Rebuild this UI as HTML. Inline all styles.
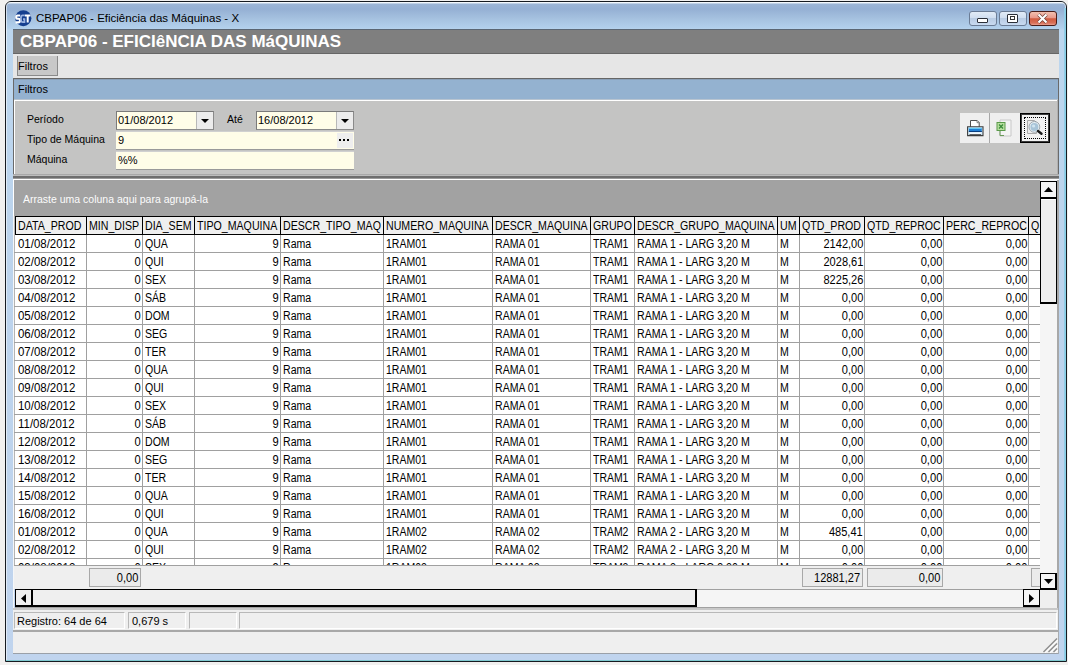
<!DOCTYPE html>
<html><head><meta charset="utf-8">
<style>
*{margin:0;padding:0;box-sizing:border-box}
html,body{width:1068px;height:665px;overflow:hidden;background:#f1f0ef;font-family:"Liberation Sans",sans-serif;font-size:11px;color:#000}
.a{position:absolute}
#win{left:5px;top:1px;width:1062px;height:661px;border:1px solid #161a20;border-radius:6px 6px 0 0;
 background:linear-gradient(to bottom,#e4eef8 0px,#e4eef8 1px,#9cb5d6 2px,#95b0d4 7px,#a6c2e0 17px,#b2d0ec 26px,#bcd6ee 28px,#bcd3ec 300px,#c0d4ee 661px);overflow:hidden}
#winin{left:6px;top:2px;width:1060px;height:659px;border:1px solid rgba(255,255,255,.55);border-radius:5px 5px 0 0;border-bottom:none}
#cyanr{left:1064px;top:8px;width:2px;height:653px;background:linear-gradient(to right,#9ccbe6,#7fd0e6)}
#cyanb{left:6px;top:660px;width:1060px;height:1px;background:#7fc9d0}
#ttl{left:36px;top:12px;font-size:11.5px;color:#000;white-space:nowrap}
#hdrtop{left:13px;top:29px;width:1046px;height:1px;background:#5b6673}
#hdr{left:13px;top:30px;width:1046px;height:24px;background:#7f7f7f;color:#fff;font-weight:bold;font-size:17px;white-space:nowrap;padding:2px 0 0 7px;border-bottom:1px solid #666}
#tabstrip{left:13px;top:54px;width:1046px;height:24px;background:#e6e6e6}
#tab{left:17px;top:56px;width:41px;height:20px;background:#c8c8c8;border-left:1px solid #8a8a8a;border-right:1px solid #8a8a8a;border-bottom:1px solid #8a8a8a;padding:4px 0 0 0}
#grpline{left:13px;top:78px;width:1046px;height:1px;background:#666}
#grpline2{left:14px;top:79px;width:1044px;height:1px;background:#8aa0b8}
#grphdr{left:13px;top:80px;width:1046px;height:19px;background:#94b2d0;padding:3px 0 0 5px;color:#000}
#grphdr2{left:13px;top:99px;width:1046px;height:1px;background:#b8c4d0}
#panelw{left:13px;top:100px;width:1046px;height:1px;background:#fff}
#panel{left:13px;top:101px;width:1046px;height:73px;background:#c4c4c3;border-left:1px solid #fff;border-right:1px solid #666}
#panelr{left:1057px;top:100px;width:1px;height:78px;background:#b0b0b0}
#grpr{left:1058px;top:78px;width:1px;height:100px;background:#6a6a6a}
#pl1{left:13px;top:174px;width:1046px;height:1px;background:#a8a8a8}
#pl2{left:13px;top:175px;width:1046px;height:1px;background:#bdbdbd}
#pl3{left:13px;top:176px;width:1046px;height:2px;background:#6e6e6e;border-bottom:none}
#pl3b{left:13px;top:178px;width:1046px;height:1px;background:#9a9a9a}
#pl4{left:13px;top:179px;width:1046px;height:1px;background:#fff}
.lbl{position:absolute;white-space:nowrap}
.inp{position:absolute;background:#fffde8;border:1px solid #7c7c7c;border-color:#7a7a7a #8a8a8a #8a8a8a #7a7a7a;padding:2px 0 0 1px;white-space:nowrap}
.inp2{position:absolute;background:#fffde8;border-bottom:1px solid #9a9a9a;border-top:1px solid #d0d0d0;padding:2px 0 0 2px;white-space:nowrap}
.ddb{position:absolute;width:17px;height:17px;background:#ececec;border-left:1px solid #b8b8b8}
#grouparea{left:13px;top:180px;width:1027px;height:36px;background:#a2a2a2;border-left:1px solid #fff}
#groupt{left:23px;top:193px;color:#fcfcfc;white-space:nowrap;font-size:10.5px}
#gridbody{left:14px;top:216px;width:1026px;height:350px;background:#fff;border-left:1px solid #b4b4b4}
.hc{position:absolute;top:216px;height:19px;background:#efefef;border-top:1px solid #000;border-bottom:1px solid #000;border-right:1px solid #000;padding:2px 0 0 2px;white-space:nowrap;overflow:hidden;font-size:12px;line-height:14px}
.cell{position:absolute;height:18px;border-right:1px solid #a0a0a0;border-bottom:1px solid #a0a0a0;padding:2px 1px 0 2px;white-space:nowrap;overflow:hidden;font-size:12px;line-height:14px}
.t{display:inline-block;transform-origin:0 0}
.tr{transform-origin:100% 0}
.cell.r{text-align:right}
#footer{left:14px;top:565px;width:1026px;height:24px;background:#efefef;border-top:1px solid #a0a0a0}
.tot{position:absolute;height:19px;background:#ebebeb;border:1px solid #a8a8a8;text-align:right;padding:2px 2px 0 0;line-height:14px;font-size:12px;white-space:nowrap}
#vsb{left:1040px;top:180px;width:17px;height:409px;background:#f5f5f5}
#hsb{left:15px;top:589px;width:1025px;height:19px;background:#f5f5f5;border-top:1px solid #a0a0a0;border-bottom:1px solid #a0a0a0}
#rightline{left:1057px;top:180px;width:2px;height:430px;background:#a8a8a8}
#status{left:13px;top:608px;width:1046px;height:45px;background:#efefef;border-top:2px solid #c8c8c8}
.sp{position:absolute;top:612px;height:17px;border:1px solid #cfcfcf;border-color:#b8b8b8 #fff #fff #b8b8b8;padding:2px 0 0 2px;white-space:nowrap;line-height:12px}
#botline{left:13px;top:630px;width:1046px;height:2px;background:#a8a8a8}
#botline2{left:13px;top:653px;width:1046px;height:1px;background:#9aa0a8}
#leftline{left:13px;top:78px;width:1px;height:100px;background:#6a6a6a}
#leftw{left:13px;top:180px;width:1px;height:473px;background:#f4f6f8}
</style></head><body>
<div id="win" class="a"></div>
<div id="winin" class="a"></div>
<div id="cyanr" class="a"></div>
<div id="cyanb" class="a"></div>
<!-- window title -->
<svg class="a" style="left:14px;top:9px" width="19" height="19" viewBox="0 0 19 19">
 <ellipse cx="9.3" cy="9.2" rx="8.1" ry="8" fill="#153f8f"/>
 <path d="M6.2 6.5 H3.6 Q2.2 6.5 2.2 8.2 Q2.2 9.8 3.8 9.8 H4.6 Q6 9.8 6 11.6 Q6 13.4 4.4 13.4 H1.6" stroke="#fff" stroke-width="2.1" fill="none"/>
 <path d="M10.6 6.4 H8.6 Q6.9 6.4 6.9 9.6 Q6.9 13.2 8.8 13.2 H10.4 V10.2 H9" stroke="#9cb4e0" stroke-width="1.8" fill="none"/>
 <path d="M10.8 6.4 H16.6 M13.7 6.4 V13.6" stroke="#fff" stroke-width="2" fill="none"/>
</svg>
<div id="ttl" class="a">CBPAP06 - Eficiência das Máquinas - X</div>
<!-- window buttons -->
<div class="a" style="left:969px;top:11px;width:28px;height:15px;border:1px solid #6b7c95;border-radius:3px;background:linear-gradient(#e1ebf6,#d0def0 45%,#b9cce4 50%,#c8daf0 100%)"></div>
<div class="a" style="left:977px;top:18px;width:11px;height:5px;background:#fff;border:1px solid #2a2f38;border-radius:1px"></div>
<div class="a" style="left:999px;top:11px;width:28px;height:15px;border:1px solid #6b7c95;border-radius:3px;background:linear-gradient(#e1ebf6,#d0def0 45%,#b9cce4 50%,#c8daf0 100%)"></div>
<div class="a" style="left:1007px;top:14px;width:11px;height:9px;background:#fff;border:1px solid #2a2f38;border-radius:1px"></div>
<div class="a" style="left:1010px;top:16px;width:5px;height:4px;background:#fff;border:1px solid #333"></div>
<div class="a" style="left:1029px;top:11px;width:28px;height:15px;border:1px solid #4a1c18;border-radius:3px;background:linear-gradient(#f2c0b0,#e8988a 45%,#d05a3e 52%,#d8705a 85%,#eaa090 100%)"></div>
<svg class="a" style="left:1036px;top:13px" width="13" height="11" viewBox="0 0 13 11"><path d="M2.5 1.5 L10.5 9.5 M10.5 1.5 L2.5 9.5" stroke="#6a3a30" stroke-width="3.4"/><path d="M2.5 1.5 L10.5 9.5 M10.5 1.5 L2.5 9.5" stroke="#fff" stroke-width="2.2"/></svg>

<div id="hdrtop" class="a"></div>
<div id="hdr" class="a">CBPAP06 - EFICIêNCIA DAS MáQUINAS</div>
<div id="tabstrip" class="a"></div>
<div id="tab" class="a">Filtros</div>
<div id="grpline" class="a"></div><div id="grpline2" class="a"></div>
<div id="grphdr" class="a">Filtros</div>
<div id="grphdr2" class="a"></div>
<div id="panelw" class="a"></div>
<div id="panel" class="a"></div><div id="panelr" class="a"></div><div id="grpr" class="a"></div>
<div id="leftline" class="a"></div><div class="a" style="left:14px;top:100px;width:1px;height:75px;background:#fff"></div><div id="leftw" class="a"></div><div id="pl1" class="a"></div><div id="pl2" class="a"></div><div id="pl3" class="a"></div><div id="pl3b" class="a"></div><div id="pl4" class="a"></div>

<div class="lbl" style="left:27px;top:113px;font-size:10.5px">Período</div>
<div class="lbl" style="left:27px;top:133px;font-size:10.5px">Tipo de Máquina</div>
<div class="lbl" style="left:27px;top:153px;font-size:10.5px">Máquina</div>
<div class="lbl" style="left:227px;top:113px;font-size:10.5px">Até</div>
<div class="inp" style="left:116px;top:111px;width:98px;height:19px">01/08/2012</div>
<div class="ddb" style="left:196px;top:112px"></div>
<svg class="a" style="left:201px;top:119px" width="8" height="4"><path d="M0 0 H8 L4 4Z" fill="#000"/></svg>
<div class="inp" style="left:256px;top:111px;width:98px;height:19px">16/08/2012</div>
<div class="ddb" style="left:336px;top:112px"></div>
<svg class="a" style="left:341px;top:119px" width="8" height="4"><path d="M0 0 H8 L4 4Z" fill="#000"/></svg>
<div class="inp2" style="left:116px;top:131px;width:238px;height:19px">9</div>
<div class="a" style="left:337px;top:133px;width:16px;height:15px;background:#eeeeee"></div>
<div class="a" style="left:339px;top:139px;width:2px;height:2px;background:#000"></div>
<div class="a" style="left:343px;top:139px;width:2px;height:2px;background:#000"></div>
<div class="a" style="left:347px;top:139px;width:2px;height:2px;background:#000"></div>
<div class="inp2" style="left:116px;top:151px;width:238px;height:19px">%%</div>

<!-- toolbar buttons -->
<div class="a" style="left:960px;top:113px;width:30px;height:30px;background:#efefef;border-right:1px solid #a8a8a8"></div>
<div class="a" style="left:990px;top:113px;width:30px;height:30px;background:#efefef"></div>
<div class="a" style="left:1020px;top:113px;width:30px;height:30px;background:#f2f2f2;border:1px solid #000;box-shadow:inset 0 0 0 1px #3a3a3a"></div>
<div class="a" style="left:1024px;top:117px;width:22px;height:22px;border:1px dotted #000"></div>
<!-- printer icon -->
<svg class="a" style="left:960px;top:114px" width="30" height="28" viewBox="0 0 30 28">
 <path d="M10.5 13 V6.5 H17.2 L19.2 8.5 V13" fill="#fff" stroke="#505050" stroke-width="1"/>
 <path d="M17 6.5 V8.7 H19.2" fill="#e8e8e8" stroke="#6a6a6a" stroke-width="0.8"/>
 <path d="M7.6 12.8 H23 V21.6 H7.6 Z" fill="#d8eefa" stroke="#3c3c3c" stroke-width="1.1"/>
 <rect x="8.8" y="13.9" width="13" height="3.9" fill="#1f7fd6"/>
 <rect x="8.8" y="13.9" width="13" height="1.1" fill="#62c8f4"/>
 <rect x="8.8" y="17" width="13" height="1" fill="#0b3d7e"/>
 <rect x="9.8" y="18.6" width="11" height="1.8" fill="#f4f8fc"/>
 <rect x="9.5" y="20.1" width="11.6" height="0.9" fill="#555"/>
</svg>
<!-- excel icon -->
<svg class="a" style="left:994px;top:117px" width="22" height="22" viewBox="0 0 22 22">
 <path d="M6 3 H17 V19 H6Z" fill="#f4f4f4" stroke="#c8c8c8"/>
 <rect x="3" y="5.5" width="8" height="8" fill="#b8e0a0" stroke="#5a9a4a"/>
 <path d="M5 7.5 L9 11.5 M9 7.5 L5 11.5" stroke="#3a8a3a" stroke-width="1.3"/>
 <path d="M6 14 V18.5 H10" stroke="#6a9a5a" fill="none"/>
</svg>
<!-- preview icon -->
<svg class="a" style="left:1024px;top:117px" width="22" height="22" viewBox="0 0 22 22">
 <path d="M3.5 3.5 H10.5 L12.5 5.5 V16.5 H3.5Z" fill="#ececec" stroke="#a8a8a8"/>
 <circle cx="10.4" cy="9.9" r="4.6" fill="#a8c4d8" stroke="#e8f0f4" stroke-width="1.2"/>
 <circle cx="10.4" cy="9.9" r="5.4" fill="none" stroke="#8a96a0" stroke-width="0.8"/>
 <circle cx="9.6" cy="9" r="1.6" fill="#d0e4f0"/>
 <path d="M14 14 L17.5 16.8" stroke="#1a1a1a" stroke-width="2.4" stroke-linecap="round"/>
</svg>

<div id="grouparea" class="a"></div>
<div id="groupt" class="a">Arraste uma coluna aqui para agrupá-la</div>
<div id="gridbody" class="a"></div>
<div class="a" style="left:0;top:0;width:1040px;height:566px;overflow:hidden">
<div class="hc" style="left:15px;width:72px;border-left:1px solid #000"><span class="t" style="transform:scaleX(0.885)">DATA_PROD</span></div>
<div class="hc" style="left:87px;width:56px"><span class="t" style="transform:scaleX(0.885)">MIN_DISP</span></div>
<div class="hc" style="left:143px;width:52px"><span class="t" style="transform:scaleX(0.885)">DIA_SEM</span></div>
<div class="hc" style="left:195px;width:86px"><span class="t" style="transform:scaleX(0.885)">TIPO_MAQUINA</span></div>
<div class="hc" style="left:281px;width:103px"><span class="t" style="transform:scaleX(0.885)">DESCR_TIPO_MAQ</span></div>
<div class="hc" style="left:384px;width:109px"><span class="t" style="transform:scaleX(0.885)">NUMERO_MAQUINA</span></div>
<div class="hc" style="left:493px;width:98px"><span class="t" style="transform:scaleX(0.885)">DESCR_MAQUINA</span></div>
<div class="hc" style="left:591px;width:44px"><span class="t" style="transform:scaleX(0.885)">GRUPO</span></div>
<div class="hc" style="left:635px;width:143px"><span class="t" style="transform:scaleX(0.885)">DESCR_GRUPO_MAQUINA</span></div>
<div class="hc" style="left:778px;width:22px"><span class="t" style="transform:scaleX(0.885)">UM</span></div>
<div class="hc" style="left:800px;width:65px"><span class="t" style="transform:scaleX(0.885)">QTD_PROD</span></div>
<div class="hc" style="left:865px;width:79px"><span class="t" style="transform:scaleX(0.885)">QTD_REPROC</span></div>
<div class="hc" style="left:944px;width:85px"><span class="t" style="transform:scaleX(0.885)">PERC_REPROC</span></div>
<div class="hc" style="left:1029px;width:42px"><span class="t" style="transform:scaleX(0.885)">Q</span></div>
<div class="cell" style="left:14px;top:235px;width:73px;padding-left:4px"><span class="t" style="transform:scaleX(0.955)">01/08/2012</span></div>
<div class="cell r" style="left:87px;top:235px;width:56px"><span class="t tr" style="transform:scaleX(0.93)">0</span></div>
<div class="cell" style="left:143px;top:235px;width:52px"><span class="t" style="transform:scaleX(0.88)">QUA</span></div>
<div class="cell r" style="left:195px;top:235px;width:86px"><span class="t tr" style="transform:scaleX(0.93)">9</span></div>
<div class="cell" style="left:281px;top:235px;width:103px"><span class="t" style="transform:scaleX(0.88)">Rama</span></div>
<div class="cell" style="left:384px;top:235px;width:109px"><span class="t" style="transform:scaleX(0.875)">1RAM01</span></div>
<div class="cell" style="left:493px;top:235px;width:98px"><span class="t" style="transform:scaleX(0.88)">RAMA 01</span></div>
<div class="cell" style="left:591px;top:235px;width:44px"><span class="t" style="transform:scaleX(0.87)">TRAM1</span></div>
<div class="cell" style="left:635px;top:235px;width:143px"><span class="t" style="transform:scaleX(0.885)">RAMA 1 - LARG 3,20 M</span></div>
<div class="cell" style="left:778px;top:235px;width:22px"><span class="t" style="transform:scaleX(0.88)">M</span></div>
<div class="cell r" style="left:800px;top:235px;width:65px"><span class="t tr" style="transform:scaleX(0.92)">2142,00</span></div>
<div class="cell r" style="left:865px;top:235px;width:79px"><span class="t tr" style="transform:scaleX(0.93)">0,00</span></div>
<div class="cell r" style="left:944px;top:235px;width:85px"><span class="t tr" style="transform:scaleX(0.93)">0,00</span></div>
<div class="cell" style="left:1029px;top:235px;width:42px"></div>
<div class="cell" style="left:14px;top:253px;width:73px;padding-left:4px"><span class="t" style="transform:scaleX(0.955)">02/08/2012</span></div>
<div class="cell r" style="left:87px;top:253px;width:56px"><span class="t tr" style="transform:scaleX(0.93)">0</span></div>
<div class="cell" style="left:143px;top:253px;width:52px"><span class="t" style="transform:scaleX(0.88)">QUI</span></div>
<div class="cell r" style="left:195px;top:253px;width:86px"><span class="t tr" style="transform:scaleX(0.93)">9</span></div>
<div class="cell" style="left:281px;top:253px;width:103px"><span class="t" style="transform:scaleX(0.88)">Rama</span></div>
<div class="cell" style="left:384px;top:253px;width:109px"><span class="t" style="transform:scaleX(0.875)">1RAM01</span></div>
<div class="cell" style="left:493px;top:253px;width:98px"><span class="t" style="transform:scaleX(0.88)">RAMA 01</span></div>
<div class="cell" style="left:591px;top:253px;width:44px"><span class="t" style="transform:scaleX(0.87)">TRAM1</span></div>
<div class="cell" style="left:635px;top:253px;width:143px"><span class="t" style="transform:scaleX(0.885)">RAMA 1 - LARG 3,20 M</span></div>
<div class="cell" style="left:778px;top:253px;width:22px"><span class="t" style="transform:scaleX(0.88)">M</span></div>
<div class="cell r" style="left:800px;top:253px;width:65px"><span class="t tr" style="transform:scaleX(0.92)">2028,61</span></div>
<div class="cell r" style="left:865px;top:253px;width:79px"><span class="t tr" style="transform:scaleX(0.93)">0,00</span></div>
<div class="cell r" style="left:944px;top:253px;width:85px"><span class="t tr" style="transform:scaleX(0.93)">0,00</span></div>
<div class="cell" style="left:1029px;top:253px;width:42px"></div>
<div class="cell" style="left:14px;top:271px;width:73px;padding-left:4px"><span class="t" style="transform:scaleX(0.955)">03/08/2012</span></div>
<div class="cell r" style="left:87px;top:271px;width:56px"><span class="t tr" style="transform:scaleX(0.93)">0</span></div>
<div class="cell" style="left:143px;top:271px;width:52px"><span class="t" style="transform:scaleX(0.88)">SEX</span></div>
<div class="cell r" style="left:195px;top:271px;width:86px"><span class="t tr" style="transform:scaleX(0.93)">9</span></div>
<div class="cell" style="left:281px;top:271px;width:103px"><span class="t" style="transform:scaleX(0.88)">Rama</span></div>
<div class="cell" style="left:384px;top:271px;width:109px"><span class="t" style="transform:scaleX(0.875)">1RAM01</span></div>
<div class="cell" style="left:493px;top:271px;width:98px"><span class="t" style="transform:scaleX(0.88)">RAMA 01</span></div>
<div class="cell" style="left:591px;top:271px;width:44px"><span class="t" style="transform:scaleX(0.87)">TRAM1</span></div>
<div class="cell" style="left:635px;top:271px;width:143px"><span class="t" style="transform:scaleX(0.885)">RAMA 1 - LARG 3,20 M</span></div>
<div class="cell" style="left:778px;top:271px;width:22px"><span class="t" style="transform:scaleX(0.88)">M</span></div>
<div class="cell r" style="left:800px;top:271px;width:65px"><span class="t tr" style="transform:scaleX(0.92)">8225,26</span></div>
<div class="cell r" style="left:865px;top:271px;width:79px"><span class="t tr" style="transform:scaleX(0.93)">0,00</span></div>
<div class="cell r" style="left:944px;top:271px;width:85px"><span class="t tr" style="transform:scaleX(0.93)">0,00</span></div>
<div class="cell" style="left:1029px;top:271px;width:42px"></div>
<div class="cell" style="left:14px;top:289px;width:73px;padding-left:4px"><span class="t" style="transform:scaleX(0.955)">04/08/2012</span></div>
<div class="cell r" style="left:87px;top:289px;width:56px"><span class="t tr" style="transform:scaleX(0.93)">0</span></div>
<div class="cell" style="left:143px;top:289px;width:52px"><span class="t" style="transform:scaleX(0.88)">SÁB</span></div>
<div class="cell r" style="left:195px;top:289px;width:86px"><span class="t tr" style="transform:scaleX(0.93)">9</span></div>
<div class="cell" style="left:281px;top:289px;width:103px"><span class="t" style="transform:scaleX(0.88)">Rama</span></div>
<div class="cell" style="left:384px;top:289px;width:109px"><span class="t" style="transform:scaleX(0.875)">1RAM01</span></div>
<div class="cell" style="left:493px;top:289px;width:98px"><span class="t" style="transform:scaleX(0.88)">RAMA 01</span></div>
<div class="cell" style="left:591px;top:289px;width:44px"><span class="t" style="transform:scaleX(0.87)">TRAM1</span></div>
<div class="cell" style="left:635px;top:289px;width:143px"><span class="t" style="transform:scaleX(0.885)">RAMA 1 - LARG 3,20 M</span></div>
<div class="cell" style="left:778px;top:289px;width:22px"><span class="t" style="transform:scaleX(0.88)">M</span></div>
<div class="cell r" style="left:800px;top:289px;width:65px"><span class="t tr" style="transform:scaleX(0.92)">0,00</span></div>
<div class="cell r" style="left:865px;top:289px;width:79px"><span class="t tr" style="transform:scaleX(0.93)">0,00</span></div>
<div class="cell r" style="left:944px;top:289px;width:85px"><span class="t tr" style="transform:scaleX(0.93)">0,00</span></div>
<div class="cell" style="left:1029px;top:289px;width:42px"></div>
<div class="cell" style="left:14px;top:307px;width:73px;padding-left:4px"><span class="t" style="transform:scaleX(0.955)">05/08/2012</span></div>
<div class="cell r" style="left:87px;top:307px;width:56px"><span class="t tr" style="transform:scaleX(0.93)">0</span></div>
<div class="cell" style="left:143px;top:307px;width:52px"><span class="t" style="transform:scaleX(0.88)">DOM</span></div>
<div class="cell r" style="left:195px;top:307px;width:86px"><span class="t tr" style="transform:scaleX(0.93)">9</span></div>
<div class="cell" style="left:281px;top:307px;width:103px"><span class="t" style="transform:scaleX(0.88)">Rama</span></div>
<div class="cell" style="left:384px;top:307px;width:109px"><span class="t" style="transform:scaleX(0.875)">1RAM01</span></div>
<div class="cell" style="left:493px;top:307px;width:98px"><span class="t" style="transform:scaleX(0.88)">RAMA 01</span></div>
<div class="cell" style="left:591px;top:307px;width:44px"><span class="t" style="transform:scaleX(0.87)">TRAM1</span></div>
<div class="cell" style="left:635px;top:307px;width:143px"><span class="t" style="transform:scaleX(0.885)">RAMA 1 - LARG 3,20 M</span></div>
<div class="cell" style="left:778px;top:307px;width:22px"><span class="t" style="transform:scaleX(0.88)">M</span></div>
<div class="cell r" style="left:800px;top:307px;width:65px"><span class="t tr" style="transform:scaleX(0.92)">0,00</span></div>
<div class="cell r" style="left:865px;top:307px;width:79px"><span class="t tr" style="transform:scaleX(0.93)">0,00</span></div>
<div class="cell r" style="left:944px;top:307px;width:85px"><span class="t tr" style="transform:scaleX(0.93)">0,00</span></div>
<div class="cell" style="left:1029px;top:307px;width:42px"></div>
<div class="cell" style="left:14px;top:325px;width:73px;padding-left:4px"><span class="t" style="transform:scaleX(0.955)">06/08/2012</span></div>
<div class="cell r" style="left:87px;top:325px;width:56px"><span class="t tr" style="transform:scaleX(0.93)">0</span></div>
<div class="cell" style="left:143px;top:325px;width:52px"><span class="t" style="transform:scaleX(0.88)">SEG</span></div>
<div class="cell r" style="left:195px;top:325px;width:86px"><span class="t tr" style="transform:scaleX(0.93)">9</span></div>
<div class="cell" style="left:281px;top:325px;width:103px"><span class="t" style="transform:scaleX(0.88)">Rama</span></div>
<div class="cell" style="left:384px;top:325px;width:109px"><span class="t" style="transform:scaleX(0.875)">1RAM01</span></div>
<div class="cell" style="left:493px;top:325px;width:98px"><span class="t" style="transform:scaleX(0.88)">RAMA 01</span></div>
<div class="cell" style="left:591px;top:325px;width:44px"><span class="t" style="transform:scaleX(0.87)">TRAM1</span></div>
<div class="cell" style="left:635px;top:325px;width:143px"><span class="t" style="transform:scaleX(0.885)">RAMA 1 - LARG 3,20 M</span></div>
<div class="cell" style="left:778px;top:325px;width:22px"><span class="t" style="transform:scaleX(0.88)">M</span></div>
<div class="cell r" style="left:800px;top:325px;width:65px"><span class="t tr" style="transform:scaleX(0.92)">0,00</span></div>
<div class="cell r" style="left:865px;top:325px;width:79px"><span class="t tr" style="transform:scaleX(0.93)">0,00</span></div>
<div class="cell r" style="left:944px;top:325px;width:85px"><span class="t tr" style="transform:scaleX(0.93)">0,00</span></div>
<div class="cell" style="left:1029px;top:325px;width:42px"></div>
<div class="cell" style="left:14px;top:343px;width:73px;padding-left:4px"><span class="t" style="transform:scaleX(0.955)">07/08/2012</span></div>
<div class="cell r" style="left:87px;top:343px;width:56px"><span class="t tr" style="transform:scaleX(0.93)">0</span></div>
<div class="cell" style="left:143px;top:343px;width:52px"><span class="t" style="transform:scaleX(0.88)">TER</span></div>
<div class="cell r" style="left:195px;top:343px;width:86px"><span class="t tr" style="transform:scaleX(0.93)">9</span></div>
<div class="cell" style="left:281px;top:343px;width:103px"><span class="t" style="transform:scaleX(0.88)">Rama</span></div>
<div class="cell" style="left:384px;top:343px;width:109px"><span class="t" style="transform:scaleX(0.875)">1RAM01</span></div>
<div class="cell" style="left:493px;top:343px;width:98px"><span class="t" style="transform:scaleX(0.88)">RAMA 01</span></div>
<div class="cell" style="left:591px;top:343px;width:44px"><span class="t" style="transform:scaleX(0.87)">TRAM1</span></div>
<div class="cell" style="left:635px;top:343px;width:143px"><span class="t" style="transform:scaleX(0.885)">RAMA 1 - LARG 3,20 M</span></div>
<div class="cell" style="left:778px;top:343px;width:22px"><span class="t" style="transform:scaleX(0.88)">M</span></div>
<div class="cell r" style="left:800px;top:343px;width:65px"><span class="t tr" style="transform:scaleX(0.92)">0,00</span></div>
<div class="cell r" style="left:865px;top:343px;width:79px"><span class="t tr" style="transform:scaleX(0.93)">0,00</span></div>
<div class="cell r" style="left:944px;top:343px;width:85px"><span class="t tr" style="transform:scaleX(0.93)">0,00</span></div>
<div class="cell" style="left:1029px;top:343px;width:42px"></div>
<div class="cell" style="left:14px;top:361px;width:73px;padding-left:4px"><span class="t" style="transform:scaleX(0.955)">08/08/2012</span></div>
<div class="cell r" style="left:87px;top:361px;width:56px"><span class="t tr" style="transform:scaleX(0.93)">0</span></div>
<div class="cell" style="left:143px;top:361px;width:52px"><span class="t" style="transform:scaleX(0.88)">QUA</span></div>
<div class="cell r" style="left:195px;top:361px;width:86px"><span class="t tr" style="transform:scaleX(0.93)">9</span></div>
<div class="cell" style="left:281px;top:361px;width:103px"><span class="t" style="transform:scaleX(0.88)">Rama</span></div>
<div class="cell" style="left:384px;top:361px;width:109px"><span class="t" style="transform:scaleX(0.875)">1RAM01</span></div>
<div class="cell" style="left:493px;top:361px;width:98px"><span class="t" style="transform:scaleX(0.88)">RAMA 01</span></div>
<div class="cell" style="left:591px;top:361px;width:44px"><span class="t" style="transform:scaleX(0.87)">TRAM1</span></div>
<div class="cell" style="left:635px;top:361px;width:143px"><span class="t" style="transform:scaleX(0.885)">RAMA 1 - LARG 3,20 M</span></div>
<div class="cell" style="left:778px;top:361px;width:22px"><span class="t" style="transform:scaleX(0.88)">M</span></div>
<div class="cell r" style="left:800px;top:361px;width:65px"><span class="t tr" style="transform:scaleX(0.92)">0,00</span></div>
<div class="cell r" style="left:865px;top:361px;width:79px"><span class="t tr" style="transform:scaleX(0.93)">0,00</span></div>
<div class="cell r" style="left:944px;top:361px;width:85px"><span class="t tr" style="transform:scaleX(0.93)">0,00</span></div>
<div class="cell" style="left:1029px;top:361px;width:42px"></div>
<div class="cell" style="left:14px;top:379px;width:73px;padding-left:4px"><span class="t" style="transform:scaleX(0.955)">09/08/2012</span></div>
<div class="cell r" style="left:87px;top:379px;width:56px"><span class="t tr" style="transform:scaleX(0.93)">0</span></div>
<div class="cell" style="left:143px;top:379px;width:52px"><span class="t" style="transform:scaleX(0.88)">QUI</span></div>
<div class="cell r" style="left:195px;top:379px;width:86px"><span class="t tr" style="transform:scaleX(0.93)">9</span></div>
<div class="cell" style="left:281px;top:379px;width:103px"><span class="t" style="transform:scaleX(0.88)">Rama</span></div>
<div class="cell" style="left:384px;top:379px;width:109px"><span class="t" style="transform:scaleX(0.875)">1RAM01</span></div>
<div class="cell" style="left:493px;top:379px;width:98px"><span class="t" style="transform:scaleX(0.88)">RAMA 01</span></div>
<div class="cell" style="left:591px;top:379px;width:44px"><span class="t" style="transform:scaleX(0.87)">TRAM1</span></div>
<div class="cell" style="left:635px;top:379px;width:143px"><span class="t" style="transform:scaleX(0.885)">RAMA 1 - LARG 3,20 M</span></div>
<div class="cell" style="left:778px;top:379px;width:22px"><span class="t" style="transform:scaleX(0.88)">M</span></div>
<div class="cell r" style="left:800px;top:379px;width:65px"><span class="t tr" style="transform:scaleX(0.92)">0,00</span></div>
<div class="cell r" style="left:865px;top:379px;width:79px"><span class="t tr" style="transform:scaleX(0.93)">0,00</span></div>
<div class="cell r" style="left:944px;top:379px;width:85px"><span class="t tr" style="transform:scaleX(0.93)">0,00</span></div>
<div class="cell" style="left:1029px;top:379px;width:42px"></div>
<div class="cell" style="left:14px;top:397px;width:73px;padding-left:4px"><span class="t" style="transform:scaleX(0.955)">10/08/2012</span></div>
<div class="cell r" style="left:87px;top:397px;width:56px"><span class="t tr" style="transform:scaleX(0.93)">0</span></div>
<div class="cell" style="left:143px;top:397px;width:52px"><span class="t" style="transform:scaleX(0.88)">SEX</span></div>
<div class="cell r" style="left:195px;top:397px;width:86px"><span class="t tr" style="transform:scaleX(0.93)">9</span></div>
<div class="cell" style="left:281px;top:397px;width:103px"><span class="t" style="transform:scaleX(0.88)">Rama</span></div>
<div class="cell" style="left:384px;top:397px;width:109px"><span class="t" style="transform:scaleX(0.875)">1RAM01</span></div>
<div class="cell" style="left:493px;top:397px;width:98px"><span class="t" style="transform:scaleX(0.88)">RAMA 01</span></div>
<div class="cell" style="left:591px;top:397px;width:44px"><span class="t" style="transform:scaleX(0.87)">TRAM1</span></div>
<div class="cell" style="left:635px;top:397px;width:143px"><span class="t" style="transform:scaleX(0.885)">RAMA 1 - LARG 3,20 M</span></div>
<div class="cell" style="left:778px;top:397px;width:22px"><span class="t" style="transform:scaleX(0.88)">M</span></div>
<div class="cell r" style="left:800px;top:397px;width:65px"><span class="t tr" style="transform:scaleX(0.92)">0,00</span></div>
<div class="cell r" style="left:865px;top:397px;width:79px"><span class="t tr" style="transform:scaleX(0.93)">0,00</span></div>
<div class="cell r" style="left:944px;top:397px;width:85px"><span class="t tr" style="transform:scaleX(0.93)">0,00</span></div>
<div class="cell" style="left:1029px;top:397px;width:42px"></div>
<div class="cell" style="left:14px;top:415px;width:73px;padding-left:4px"><span class="t" style="transform:scaleX(0.955)">11/08/2012</span></div>
<div class="cell r" style="left:87px;top:415px;width:56px"><span class="t tr" style="transform:scaleX(0.93)">0</span></div>
<div class="cell" style="left:143px;top:415px;width:52px"><span class="t" style="transform:scaleX(0.88)">SÁB</span></div>
<div class="cell r" style="left:195px;top:415px;width:86px"><span class="t tr" style="transform:scaleX(0.93)">9</span></div>
<div class="cell" style="left:281px;top:415px;width:103px"><span class="t" style="transform:scaleX(0.88)">Rama</span></div>
<div class="cell" style="left:384px;top:415px;width:109px"><span class="t" style="transform:scaleX(0.875)">1RAM01</span></div>
<div class="cell" style="left:493px;top:415px;width:98px"><span class="t" style="transform:scaleX(0.88)">RAMA 01</span></div>
<div class="cell" style="left:591px;top:415px;width:44px"><span class="t" style="transform:scaleX(0.87)">TRAM1</span></div>
<div class="cell" style="left:635px;top:415px;width:143px"><span class="t" style="transform:scaleX(0.885)">RAMA 1 - LARG 3,20 M</span></div>
<div class="cell" style="left:778px;top:415px;width:22px"><span class="t" style="transform:scaleX(0.88)">M</span></div>
<div class="cell r" style="left:800px;top:415px;width:65px"><span class="t tr" style="transform:scaleX(0.92)">0,00</span></div>
<div class="cell r" style="left:865px;top:415px;width:79px"><span class="t tr" style="transform:scaleX(0.93)">0,00</span></div>
<div class="cell r" style="left:944px;top:415px;width:85px"><span class="t tr" style="transform:scaleX(0.93)">0,00</span></div>
<div class="cell" style="left:1029px;top:415px;width:42px"></div>
<div class="cell" style="left:14px;top:433px;width:73px;padding-left:4px"><span class="t" style="transform:scaleX(0.955)">12/08/2012</span></div>
<div class="cell r" style="left:87px;top:433px;width:56px"><span class="t tr" style="transform:scaleX(0.93)">0</span></div>
<div class="cell" style="left:143px;top:433px;width:52px"><span class="t" style="transform:scaleX(0.88)">DOM</span></div>
<div class="cell r" style="left:195px;top:433px;width:86px"><span class="t tr" style="transform:scaleX(0.93)">9</span></div>
<div class="cell" style="left:281px;top:433px;width:103px"><span class="t" style="transform:scaleX(0.88)">Rama</span></div>
<div class="cell" style="left:384px;top:433px;width:109px"><span class="t" style="transform:scaleX(0.875)">1RAM01</span></div>
<div class="cell" style="left:493px;top:433px;width:98px"><span class="t" style="transform:scaleX(0.88)">RAMA 01</span></div>
<div class="cell" style="left:591px;top:433px;width:44px"><span class="t" style="transform:scaleX(0.87)">TRAM1</span></div>
<div class="cell" style="left:635px;top:433px;width:143px"><span class="t" style="transform:scaleX(0.885)">RAMA 1 - LARG 3,20 M</span></div>
<div class="cell" style="left:778px;top:433px;width:22px"><span class="t" style="transform:scaleX(0.88)">M</span></div>
<div class="cell r" style="left:800px;top:433px;width:65px"><span class="t tr" style="transform:scaleX(0.92)">0,00</span></div>
<div class="cell r" style="left:865px;top:433px;width:79px"><span class="t tr" style="transform:scaleX(0.93)">0,00</span></div>
<div class="cell r" style="left:944px;top:433px;width:85px"><span class="t tr" style="transform:scaleX(0.93)">0,00</span></div>
<div class="cell" style="left:1029px;top:433px;width:42px"></div>
<div class="cell" style="left:14px;top:451px;width:73px;padding-left:4px"><span class="t" style="transform:scaleX(0.955)">13/08/2012</span></div>
<div class="cell r" style="left:87px;top:451px;width:56px"><span class="t tr" style="transform:scaleX(0.93)">0</span></div>
<div class="cell" style="left:143px;top:451px;width:52px"><span class="t" style="transform:scaleX(0.88)">SEG</span></div>
<div class="cell r" style="left:195px;top:451px;width:86px"><span class="t tr" style="transform:scaleX(0.93)">9</span></div>
<div class="cell" style="left:281px;top:451px;width:103px"><span class="t" style="transform:scaleX(0.88)">Rama</span></div>
<div class="cell" style="left:384px;top:451px;width:109px"><span class="t" style="transform:scaleX(0.875)">1RAM01</span></div>
<div class="cell" style="left:493px;top:451px;width:98px"><span class="t" style="transform:scaleX(0.88)">RAMA 01</span></div>
<div class="cell" style="left:591px;top:451px;width:44px"><span class="t" style="transform:scaleX(0.87)">TRAM1</span></div>
<div class="cell" style="left:635px;top:451px;width:143px"><span class="t" style="transform:scaleX(0.885)">RAMA 1 - LARG 3,20 M</span></div>
<div class="cell" style="left:778px;top:451px;width:22px"><span class="t" style="transform:scaleX(0.88)">M</span></div>
<div class="cell r" style="left:800px;top:451px;width:65px"><span class="t tr" style="transform:scaleX(0.92)">0,00</span></div>
<div class="cell r" style="left:865px;top:451px;width:79px"><span class="t tr" style="transform:scaleX(0.93)">0,00</span></div>
<div class="cell r" style="left:944px;top:451px;width:85px"><span class="t tr" style="transform:scaleX(0.93)">0,00</span></div>
<div class="cell" style="left:1029px;top:451px;width:42px"></div>
<div class="cell" style="left:14px;top:469px;width:73px;padding-left:4px"><span class="t" style="transform:scaleX(0.955)">14/08/2012</span></div>
<div class="cell r" style="left:87px;top:469px;width:56px"><span class="t tr" style="transform:scaleX(0.93)">0</span></div>
<div class="cell" style="left:143px;top:469px;width:52px"><span class="t" style="transform:scaleX(0.88)">TER</span></div>
<div class="cell r" style="left:195px;top:469px;width:86px"><span class="t tr" style="transform:scaleX(0.93)">9</span></div>
<div class="cell" style="left:281px;top:469px;width:103px"><span class="t" style="transform:scaleX(0.88)">Rama</span></div>
<div class="cell" style="left:384px;top:469px;width:109px"><span class="t" style="transform:scaleX(0.875)">1RAM01</span></div>
<div class="cell" style="left:493px;top:469px;width:98px"><span class="t" style="transform:scaleX(0.88)">RAMA 01</span></div>
<div class="cell" style="left:591px;top:469px;width:44px"><span class="t" style="transform:scaleX(0.87)">TRAM1</span></div>
<div class="cell" style="left:635px;top:469px;width:143px"><span class="t" style="transform:scaleX(0.885)">RAMA 1 - LARG 3,20 M</span></div>
<div class="cell" style="left:778px;top:469px;width:22px"><span class="t" style="transform:scaleX(0.88)">M</span></div>
<div class="cell r" style="left:800px;top:469px;width:65px"><span class="t tr" style="transform:scaleX(0.92)">0,00</span></div>
<div class="cell r" style="left:865px;top:469px;width:79px"><span class="t tr" style="transform:scaleX(0.93)">0,00</span></div>
<div class="cell r" style="left:944px;top:469px;width:85px"><span class="t tr" style="transform:scaleX(0.93)">0,00</span></div>
<div class="cell" style="left:1029px;top:469px;width:42px"></div>
<div class="cell" style="left:14px;top:487px;width:73px;padding-left:4px"><span class="t" style="transform:scaleX(0.955)">15/08/2012</span></div>
<div class="cell r" style="left:87px;top:487px;width:56px"><span class="t tr" style="transform:scaleX(0.93)">0</span></div>
<div class="cell" style="left:143px;top:487px;width:52px"><span class="t" style="transform:scaleX(0.88)">QUA</span></div>
<div class="cell r" style="left:195px;top:487px;width:86px"><span class="t tr" style="transform:scaleX(0.93)">9</span></div>
<div class="cell" style="left:281px;top:487px;width:103px"><span class="t" style="transform:scaleX(0.88)">Rama</span></div>
<div class="cell" style="left:384px;top:487px;width:109px"><span class="t" style="transform:scaleX(0.875)">1RAM01</span></div>
<div class="cell" style="left:493px;top:487px;width:98px"><span class="t" style="transform:scaleX(0.88)">RAMA 01</span></div>
<div class="cell" style="left:591px;top:487px;width:44px"><span class="t" style="transform:scaleX(0.87)">TRAM1</span></div>
<div class="cell" style="left:635px;top:487px;width:143px"><span class="t" style="transform:scaleX(0.885)">RAMA 1 - LARG 3,20 M</span></div>
<div class="cell" style="left:778px;top:487px;width:22px"><span class="t" style="transform:scaleX(0.88)">M</span></div>
<div class="cell r" style="left:800px;top:487px;width:65px"><span class="t tr" style="transform:scaleX(0.92)">0,00</span></div>
<div class="cell r" style="left:865px;top:487px;width:79px"><span class="t tr" style="transform:scaleX(0.93)">0,00</span></div>
<div class="cell r" style="left:944px;top:487px;width:85px"><span class="t tr" style="transform:scaleX(0.93)">0,00</span></div>
<div class="cell" style="left:1029px;top:487px;width:42px"></div>
<div class="cell" style="left:14px;top:505px;width:73px;padding-left:4px"><span class="t" style="transform:scaleX(0.955)">16/08/2012</span></div>
<div class="cell r" style="left:87px;top:505px;width:56px"><span class="t tr" style="transform:scaleX(0.93)">0</span></div>
<div class="cell" style="left:143px;top:505px;width:52px"><span class="t" style="transform:scaleX(0.88)">QUI</span></div>
<div class="cell r" style="left:195px;top:505px;width:86px"><span class="t tr" style="transform:scaleX(0.93)">9</span></div>
<div class="cell" style="left:281px;top:505px;width:103px"><span class="t" style="transform:scaleX(0.88)">Rama</span></div>
<div class="cell" style="left:384px;top:505px;width:109px"><span class="t" style="transform:scaleX(0.875)">1RAM01</span></div>
<div class="cell" style="left:493px;top:505px;width:98px"><span class="t" style="transform:scaleX(0.88)">RAMA 01</span></div>
<div class="cell" style="left:591px;top:505px;width:44px"><span class="t" style="transform:scaleX(0.87)">TRAM1</span></div>
<div class="cell" style="left:635px;top:505px;width:143px"><span class="t" style="transform:scaleX(0.885)">RAMA 1 - LARG 3,20 M</span></div>
<div class="cell" style="left:778px;top:505px;width:22px"><span class="t" style="transform:scaleX(0.88)">M</span></div>
<div class="cell r" style="left:800px;top:505px;width:65px"><span class="t tr" style="transform:scaleX(0.92)">0,00</span></div>
<div class="cell r" style="left:865px;top:505px;width:79px"><span class="t tr" style="transform:scaleX(0.93)">0,00</span></div>
<div class="cell r" style="left:944px;top:505px;width:85px"><span class="t tr" style="transform:scaleX(0.93)">0,00</span></div>
<div class="cell" style="left:1029px;top:505px;width:42px"></div>
<div class="cell" style="left:14px;top:523px;width:73px;padding-left:4px"><span class="t" style="transform:scaleX(0.955)">01/08/2012</span></div>
<div class="cell r" style="left:87px;top:523px;width:56px"><span class="t tr" style="transform:scaleX(0.93)">0</span></div>
<div class="cell" style="left:143px;top:523px;width:52px"><span class="t" style="transform:scaleX(0.88)">QUA</span></div>
<div class="cell r" style="left:195px;top:523px;width:86px"><span class="t tr" style="transform:scaleX(0.93)">9</span></div>
<div class="cell" style="left:281px;top:523px;width:103px"><span class="t" style="transform:scaleX(0.88)">Rama</span></div>
<div class="cell" style="left:384px;top:523px;width:109px"><span class="t" style="transform:scaleX(0.875)">1RAM02</span></div>
<div class="cell" style="left:493px;top:523px;width:98px"><span class="t" style="transform:scaleX(0.88)">RAMA 02</span></div>
<div class="cell" style="left:591px;top:523px;width:44px"><span class="t" style="transform:scaleX(0.87)">TRAM2</span></div>
<div class="cell" style="left:635px;top:523px;width:143px"><span class="t" style="transform:scaleX(0.885)">RAMA 2 - LARG 3,20 M</span></div>
<div class="cell" style="left:778px;top:523px;width:22px"><span class="t" style="transform:scaleX(0.88)">M</span></div>
<div class="cell r" style="left:800px;top:523px;width:65px"><span class="t tr" style="transform:scaleX(0.92)">485,41</span></div>
<div class="cell r" style="left:865px;top:523px;width:79px"><span class="t tr" style="transform:scaleX(0.93)">0,00</span></div>
<div class="cell r" style="left:944px;top:523px;width:85px"><span class="t tr" style="transform:scaleX(0.93)">0,00</span></div>
<div class="cell" style="left:1029px;top:523px;width:42px"></div>
<div class="cell" style="left:14px;top:541px;width:73px;padding-left:4px"><span class="t" style="transform:scaleX(0.955)">02/08/2012</span></div>
<div class="cell r" style="left:87px;top:541px;width:56px"><span class="t tr" style="transform:scaleX(0.93)">0</span></div>
<div class="cell" style="left:143px;top:541px;width:52px"><span class="t" style="transform:scaleX(0.88)">QUI</span></div>
<div class="cell r" style="left:195px;top:541px;width:86px"><span class="t tr" style="transform:scaleX(0.93)">9</span></div>
<div class="cell" style="left:281px;top:541px;width:103px"><span class="t" style="transform:scaleX(0.88)">Rama</span></div>
<div class="cell" style="left:384px;top:541px;width:109px"><span class="t" style="transform:scaleX(0.875)">1RAM02</span></div>
<div class="cell" style="left:493px;top:541px;width:98px"><span class="t" style="transform:scaleX(0.88)">RAMA 02</span></div>
<div class="cell" style="left:591px;top:541px;width:44px"><span class="t" style="transform:scaleX(0.87)">TRAM2</span></div>
<div class="cell" style="left:635px;top:541px;width:143px"><span class="t" style="transform:scaleX(0.885)">RAMA 2 - LARG 3,20 M</span></div>
<div class="cell" style="left:778px;top:541px;width:22px"><span class="t" style="transform:scaleX(0.88)">M</span></div>
<div class="cell r" style="left:800px;top:541px;width:65px"><span class="t tr" style="transform:scaleX(0.92)">0,00</span></div>
<div class="cell r" style="left:865px;top:541px;width:79px"><span class="t tr" style="transform:scaleX(0.93)">0,00</span></div>
<div class="cell r" style="left:944px;top:541px;width:85px"><span class="t tr" style="transform:scaleX(0.93)">0,00</span></div>
<div class="cell" style="left:1029px;top:541px;width:42px"></div>
<div class="cell" style="left:14px;top:559px;width:73px;padding-left:4px"><span class="t" style="transform:scaleX(0.955)">03/08/2012</span></div>
<div class="cell r" style="left:87px;top:559px;width:56px"><span class="t tr" style="transform:scaleX(0.93)">0</span></div>
<div class="cell" style="left:143px;top:559px;width:52px"><span class="t" style="transform:scaleX(0.88)">SEX</span></div>
<div class="cell r" style="left:195px;top:559px;width:86px"><span class="t tr" style="transform:scaleX(0.93)">9</span></div>
<div class="cell" style="left:281px;top:559px;width:103px"><span class="t" style="transform:scaleX(0.88)">Rama</span></div>
<div class="cell" style="left:384px;top:559px;width:109px"><span class="t" style="transform:scaleX(0.875)">1RAM02</span></div>
<div class="cell" style="left:493px;top:559px;width:98px"><span class="t" style="transform:scaleX(0.88)">RAMA 02</span></div>
<div class="cell" style="left:591px;top:559px;width:44px"><span class="t" style="transform:scaleX(0.87)">TRAM2</span></div>
<div class="cell" style="left:635px;top:559px;width:143px"><span class="t" style="transform:scaleX(0.885)">RAMA 2 - LARG 3,20 M</span></div>
<div class="cell" style="left:778px;top:559px;width:22px"><span class="t" style="transform:scaleX(0.88)">M</span></div>
<div class="cell r" style="left:800px;top:559px;width:65px"><span class="t tr" style="transform:scaleX(0.92)">0,00</span></div>
<div class="cell r" style="left:865px;top:559px;width:79px"><span class="t tr" style="transform:scaleX(0.93)">0,00</span></div>
<div class="cell r" style="left:944px;top:559px;width:85px"><span class="t tr" style="transform:scaleX(0.93)">0,00</span></div>
<div class="cell" style="left:1029px;top:559px;width:42px"></div>
</div>
<div id="footer" class="a"></div>
<div class="tot" style="left:89px;top:568px;width:52px"><span class="t tr" style="transform:scaleX(0.92)">0,00</span></div>
<div class="tot" style="left:802px;top:568px;width:61px"><span class="t tr" style="transform:scaleX(0.92)">12881,27</span></div>
<div class="tot" style="left:867px;top:568px;width:76px"><span class="t tr" style="transform:scaleX(0.92)">0,00</span></div>
<div class="tot" style="left:1031px;top:568px;width:12px"></div>

<div id="vsb" class="a"></div>
<div class="a" style="left:1040px;top:181px;width:17px;height:18px;background:#f5f5f5;border:1px solid #000;border-width:1px 1px 2px 1px"></div>
<svg class="a" style="left:1044px;top:187px" width="9" height="5"><path d="M0 5 H9 L4.5 0Z" fill="#000"/></svg>
<div class="a" style="left:1040px;top:199px;width:17px;height:105px;background:#efefef;border:1px solid #000;border-width:0 1px 2px 1px"></div>
<div class="a" style="left:1041px;top:199px;width:15px;height:1px;background:#fff"></div>
<div class="a" style="left:1040px;top:573px;width:17px;height:17px;background:#f5f5f5;border:1px solid #000;border-width:1px 2px 2px 1px"></div>
<svg class="a" style="left:1044px;top:579px" width="9" height="5"><path d="M0 0 H9 L4.5 5Z" fill="#000"/></svg>

<div id="hsb" class="a"></div>
<div class="a" style="left:15px;top:589px;width:682px;height:18px;background:#efefef;border:1px solid #000;border-width:1px 2px 2px 1px"></div>
<div class="a" style="left:31px;top:590px;width:2px;height:16px;background:#000"></div>
<svg class="a" style="left:21px;top:594px" width="5" height="9"><path d="M5 0 V9 L0 4.5Z" fill="#000"/></svg>
<div class="a" style="left:1023px;top:589px;width:17px;height:18px;background:#f5f5f5;border:1px solid #000;border-width:1px 1px 2px 1px"></div>
<svg class="a" style="left:1029px;top:594px" width="5" height="9"><path d="M0 0 V9 L5 4.5Z" fill="#000"/></svg>

<div id="rightline" class="a"></div>
<div class="a" style="left:1040px;top:590px;width:17px;height:18px;background:#efefef"></div>
<div id="status" class="a"></div>
<div class="sp" style="left:14px;width:111px">Registro: 64 de 64</div>
<div class="sp" style="left:128px;width:58px;padding-left:3px">0,679 s</div>
<div class="sp" style="left:189px;width:48px"></div>
<div class="sp" style="left:239px;width:818px"></div>
<div id="botline" class="a"></div>
<div id="botline2" class="a"></div>
<svg class="a" style="left:1042px;top:637px" width="16" height="16" viewBox="0 0 16 16">
 <path d="M15 2 L1.5 15.5 M15 7 L6.5 15.5 M15 12 L11.5 15.5" stroke="#fff" stroke-width="1.2" transform="translate(0.8,0.8)"/>
 <path d="M15 1.5 L1.5 15 M15 6.5 L6.5 15 M15 11.5 L11.5 15" stroke="#8e8e8e" stroke-width="1.5"/>
</svg>
<div class="a" style="left:1058px;top:607px;width:1px;height:47px;background:#a8acb0"></div>
</body></html>
